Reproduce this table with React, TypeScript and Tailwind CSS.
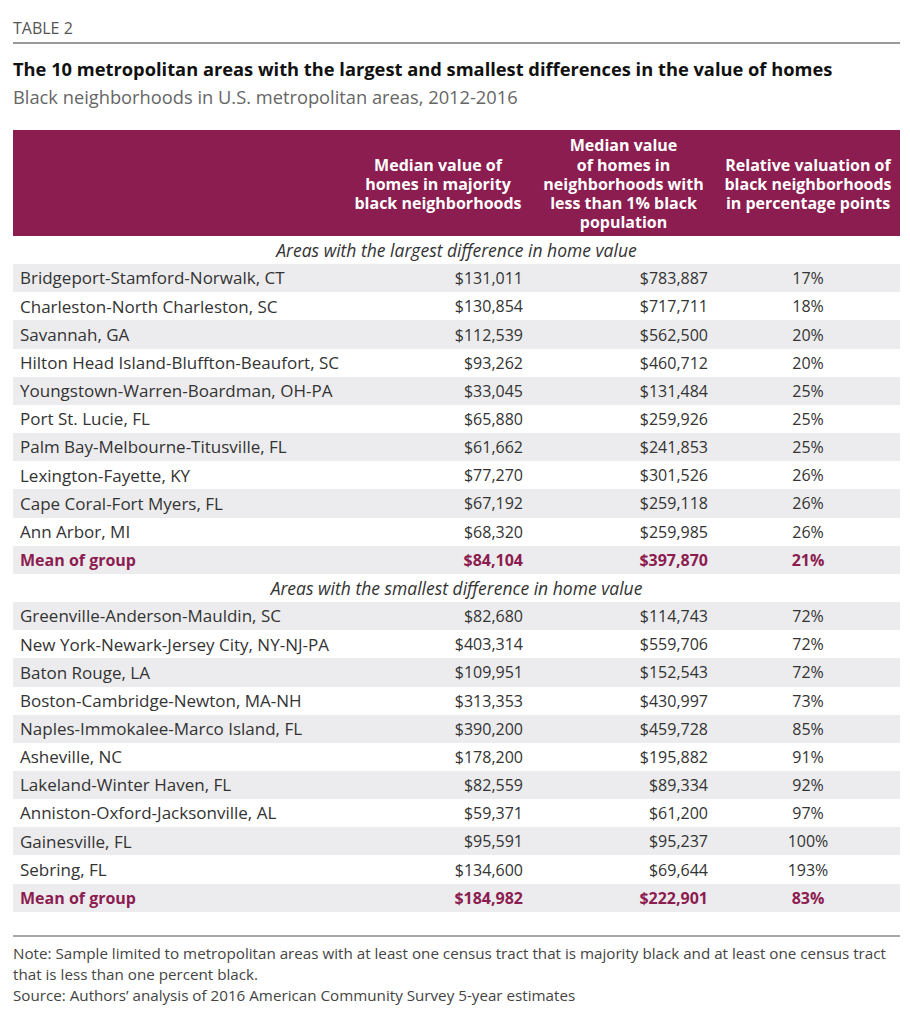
import React from "react";

type Row = { name: string; black: string; white: string; pct: string };

const LARGEST: Row[] = [
  { name: "Bridgeport-Stamford-Norwalk, CT", black: "$131,011", white: "$783,887", pct: "17%" },
  { name: "Charleston-North Charleston, SC", black: "$130,854", white: "$717,711", pct: "18%" },
  { name: "Savannah, GA", black: "$112,539", white: "$562,500", pct: "20%" },
  { name: "Hilton Head Island-Bluffton-Beaufort, SC", black: "$93,262", white: "$460,712", pct: "20%" },
  { name: "Youngstown-Warren-Boardman, OH-PA", black: "$33,045", white: "$131,484", pct: "25%" },
  { name: "Port St. Lucie, FL", black: "$65,880", white: "$259,926", pct: "25%" },
  { name: "Palm Bay-Melbourne-Titusville, FL", black: "$61,662", white: "$241,853", pct: "25%" },
  { name: "Lexington-Fayette, KY", black: "$77,270", white: "$301,526", pct: "26%" },
  { name: "Cape Coral-Fort Myers, FL", black: "$67,192", white: "$259,118", pct: "26%" },
  { name: "Ann Arbor, MI", black: "$68,320", white: "$259,985", pct: "26%" },
];

const SMALLEST: Row[] = [
  { name: "Greenville-Anderson-Mauldin, SC", black: "$82,680", white: "$114,743", pct: "72%" },
  { name: "New York-Newark-Jersey City, NY-NJ-PA", black: "$403,314", white: "$559,706", pct: "72%" },
  { name: "Baton Rouge, LA", black: "$109,951", white: "$152,543", pct: "72%" },
  { name: "Boston-Cambridge-Newton, MA-NH", black: "$313,353", white: "$430,997", pct: "73%" },
  { name: "Naples-Immokalee-Marco Island, FL", black: "$390,200", white: "$459,728", pct: "85%" },
  { name: "Asheville, NC", black: "$178,200", white: "$195,882", pct: "91%" },
  { name: "Lakeland-Winter Haven, FL", black: "$82,559", white: "$89,334", pct: "92%" },
  { name: "Anniston-Oxford-Jacksonville, AL", black: "$59,371", white: "$61,200", pct: "97%" },
  { name: "Gainesville, FL", black: "$95,591", white: "$95,237", pct: "100%" },
  { name: "Sebring, FL", black: "$134,600", white: "$69,644", pct: "193%" },
];

const GRID = "grid grid-cols-[332px_186px_185px_184px]";

function DataRow({ row, shaded, mean }: { row: Row; shaded: boolean; mean?: boolean }) {
  const tone = mean ? "font-bold text-[#8c1d50]" : "text-[#333333]";
  return (
    <div className={`${GRID} h-[28.17px] items-center text-[16px] ${tone} ${shaded ? "bg-[#ececee]" : "bg-white"}`}>
      <div className={`pl-[7px] ${mean ? "text-[16px]" : "text-[17px]"}`}>{row.name}</div>
      <div className="pr-[8px] text-right">{row.black}</div>
      <div className="pr-[8px] text-right">{row.white}</div>
      <div className="text-center">{row.pct}</div>
    </div>
  );
}

function Section({ label, rows, mean }: { label: string; rows: Row[]; mean: Row }) {
  return (
    <>
      <div className="flex h-[28.17px] items-center justify-center bg-white text-[17.5px] italic text-[#333333]">
        {label}
      </div>
      {rows.map((row, i) => (
        <DataRow key={row.name} row={row} shaded={i % 2 === 0} />
      ))}
      <DataRow row={mean} shaded mean />
    </>
  );
}

export default function App() {
  return (
    <div className="h-[1020px] w-[910px] bg-white pl-[13px] pt-[18px] font-['Open_Sans',sans-serif]">
      <div className="w-[887px]">
        <p className="text-[16px] leading-[20px] text-[#555555]">TABLE 2</p>
        <div className="mt-[4px] h-[2px] bg-[#9a9a9a]" />
        <h1 className="mt-[14px] text-[18.3px] font-bold leading-[22px] text-[#111111]">
          The 10 metropolitan areas with the largest and smallest differences in the value of homes
        </h1>
        <p className="mt-[6px] text-[18.3px] leading-[22px] text-[#666666]">
          Black neighborhoods in U.S. metropolitan areas, 2012-2016
        </p>

        <div className="mt-[22px]">
          <div className={`${GRID} h-[106px] items-center bg-[#8b1d50] pt-[3px] text-center text-[16px] font-bold leading-[19.2px] text-white`}>
            <div />
            <div>
              Median value of
              <br />
              homes in majority
              <br />
              black neighborhoods
            </div>
            <div>
              Median value
              <br />
              of homes in
              <br />
              neighborhoods with
              <br />
              less than 1% black
              <br />
              population
            </div>
            <div>
              Relative valuation of
              <br />
              black neighborhoods
              <br />
              in percentage points
            </div>
          </div>

          <Section
            label="Areas with the largest difference in home value"
            rows={LARGEST}
            mean={{ name: "Mean of group", black: "$84,104", white: "$397,870", pct: "21%" }}
          />
          <Section
            label="Areas with the smallest difference in home value"
            rows={SMALLEST}
            mean={{ name: "Mean of group", black: "$184,982", white: "$222,901", pct: "83%" }}
          />
        </div>

        <div className="mt-[23px] h-[2px] bg-[#a8a8a8]" />
        <div className="mt-[6px] text-[15.2px] leading-[21px] text-[#444444]">
          <p>
            Note: Sample limited to metropolitan areas with at least one census tract that is majority black and at
            least one census tract that is less than one percent black.
          </p>
          <p>Source: Authors’ analysis of 2016 American Community Survey 5-year estimates</p>
        </div>
      </div>
    </div>
  );
}
